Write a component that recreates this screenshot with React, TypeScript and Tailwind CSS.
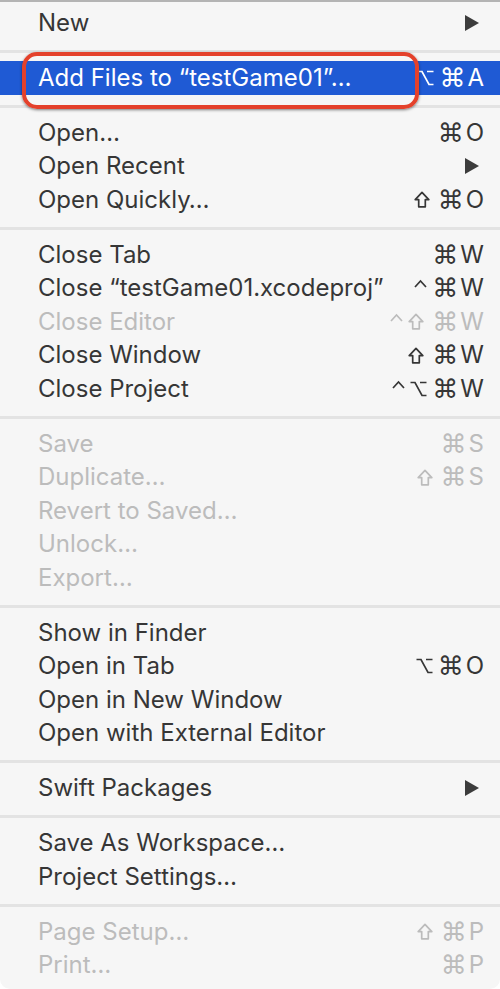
type Item =
  | { sep: true }
  | { label: string; keys?: string; sub?: boolean; off?: boolean; hot?: boolean };

const items: Item[] = [
  { label: 'New', sub: true },
  { sep: true },
  { label: 'Add Files to “testGame01”…', keys: '⌥⌘A', hot: true },
  { sep: true },
  { label: 'Open…', keys: '⌘O' },
  { label: 'Open Recent', sub: true },
  { label: 'Open Quickly…', keys: '⇧⌘O' },
  { sep: true },
  { label: 'Close Tab', keys: '⌘W' },
  { label: 'Close “testGame01.xcodeproj”', keys: '^⌘W' },
  { label: 'Close Editor', keys: '^⇧⌘W', off: true },
  { label: 'Close Window', keys: '⇧⌘W' },
  { label: 'Close Project', keys: '^⌥⌘W' },
  { sep: true },
  { label: 'Save', keys: '⌘S', off: true },
  { label: 'Duplicate…', keys: '⇧⌘S', off: true },
  { label: 'Revert to Saved…', off: true },
  { label: 'Unlock…', off: true },
  { label: 'Export…', off: true },
  { sep: true },
  { label: 'Show in Finder' },
  { label: 'Open in Tab', keys: '⌥⌘O' },
  { label: 'Open in New Window' },
  { label: 'Open with External Editor' },
  { sep: true },
  { label: 'Swift Packages', sub: true },
  { sep: true },
  { label: 'Save As Workspace…' },
  { label: 'Project Settings…' },
  { sep: true },
  { label: 'Page Setup…', keys: '⇧⌘P', off: true },
  { label: 'Print…', keys: '⌘P', off: true },
];

function Arrow() {
  return (
    <svg width="16" height="18" viewBox="0 0 16 18" className="mr-[4px] shrink-0">
      <path d="M1 1 L15 9 L1 17 Z" fill="#3c3c3c" />
    </svg>
  );
}

function Shift() {
  return (
    <svg width="16" height="17" viewBox="0 0 16 17" className="mr-[8px] shrink-0">
      <path
        d="M8 1.3 L14.8 8.6 H11.3 V15.8 H4.7 V8.6 H1.2 Z"
        fill="none"
        stroke="currentColor"
        strokeWidth="1.7"
        strokeLinejoin="round"
      />
    </svg>
  );
}

function Caret() {
  return (
    <svg width="13" height="18" viewBox="0 0 13 18" className="mr-[5px] shrink-0">
      <path d="M1 8 L6.5 2 L12 8" fill="none" stroke="currentColor" strokeWidth="1.7" />
    </svg>
  );
}

function Option() {
  return (
    <svg width="17" height="18" viewBox="0 0 17 18" className="mr-[5px] shrink-0">
      <path d="M0.5 2.5 H5 L12 15.5 H16.5 M10 2.5 H16.5" fill="none" stroke="currentColor" strokeWidth="1.7" />
    </svg>
  );
}

function Keys({ keys }: { keys: string }) {
  return (
    <span className="flex shrink-0 items-center">
      {keys.split('').map((k, i) => {
        if (k === '⇧') return <Shift key={i} />;
        if (k === '^') return <Caret key={i} />;
        if (k === '⌥') return <Option key={i} />;
        if (k === '⌘')
          return (
            <span key={i} className="mr-[2px] font-['DejaVu_Sans',sans-serif] text-[26px] leading-none">
              {k}
            </span>
          );
        return (
          <span key={i} className="leading-none">
            {k}
          </span>
        );
      })}
    </span>
  );
}

function Row({ item }: { item: Exclude<Item, { sep: true }> }) {
  const color = item.hot ? 'text-white' : item.off ? 'text-[#bcbcbc]' : 'text-[#363636]';
  return (
    <div
      className={`relative flex h-[33.5px] items-center justify-between pl-[38px] pr-[16px] ${
        item.hot ? 'bg-[#1f5ad4]' : ''
      } ${color}`}
    >
      <span className="whitespace-nowrap">{item.label}</span>
      {item.keys && <Keys keys={item.keys} />}
      {item.sub && <Arrow />}
      {item.hot && (
        <div className="pointer-events-none absolute left-[22px] top-[-9px] h-[57px] w-[397px] rounded-[15px] border-[4px] border-[#e4412b] shadow-[0_1px_3px_rgba(0,0,0,0.5)]" />
      )}
    </div>
  );
}

export default function App() {
  return (
    <div className="h-[989px] w-[500px] overflow-hidden rounded-b-[10px] border-t-2 border-[#b4b4b4] bg-[#f6f6f6] pt-[4px] font-['Inter',sans-serif] text-[24px]">
      {items.map((it, i) =>
        'sep' in it ? (
          <div key={i} className="flex h-[21.5px] flex-col pt-[10px]">
            <div className="h-[3px] bg-[#e3e3e3]" />
          </div>
        ) : (
          <Row key={i} item={it} />
        ),
      )}
    </div>
  );
}
